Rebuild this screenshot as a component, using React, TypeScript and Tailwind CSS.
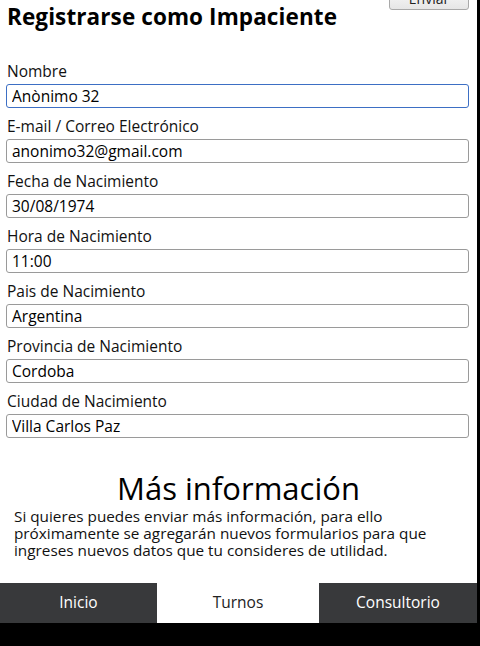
import React from 'react';

const campos = [
  { label: 'Nombre', value: 'Anònimo 32', focus: true },
  { label: 'E-mail / Correo Electrónico', value: 'anonimo32@gmail.com' },
  { label: 'Fecha de Nacimiento', value: '30/08/1974' },
  { label: 'Hora de Nacimiento', value: '11:00' },
  { label: 'Pais de Nacimiento', value: 'Argentina' },
  { label: 'Provincia de Nacimiento', value: 'Cordoba' },
  { label: 'Ciudad de Nacimiento', value: 'Villa Carlos Paz' },
];

const App: React.FC = () => {
  return (
    <div className="min-h-screen bg-black font-['Open_Sans',sans-serif] text-black">
      <div className="w-[477px] h-[623px] bg-white flex flex-col overflow-hidden">
        {/* Header */}
        <div className="flex justify-between items-start">
          <h1 className="pl-[7px] pt-[2px] text-[22.5px] leading-[30px] font-bold tracking-[0.1px]">
            Registrarse como Impaciente
          </h1>
          <button className="-mt-[12px] mr-[8px] w-[80px] h-[22px] border border-[#a9a9a9] rounded-[3px] bg-gradient-to-b from-[#fafafa] to-[#e6e6e6] text-[14px] leading-[20px] text-[#222]">
            Enviar
          </button>
        </div>

        {/* Form */}
        <div className="mt-[29px] px-[6px] pr-[8px] flex flex-col gap-[8px]">
          {campos.map((c) => (
            <div key={c.label} className="flex flex-col gap-[3px]">
              <label className="pl-px text-[15.5px] leading-[20px] text-[#111]">{c.label}</label>
              <input
                readOnly
                value={c.value}
                className={
                  c.focus
                    ? 'h-[24px] w-full rounded-[3px] border border-[#3d6fc4] px-[5px] text-[15.5px] leading-[22px] outline-none'
                    : 'h-[24px] w-full rounded-[3px] border border-[#9a9a9a] px-[5px] text-[15.5px] leading-[22px] outline-none'
                }
              />
            </div>
          ))}
        </div>

        {/* Más información */}
        <h2 className="mt-[32px] text-center text-[31px] leading-[36px]">Más información</h2>
        <p className="mt-[2px] px-[14px] text-[15.3px] leading-[17px] text-[#111]">
          Si quieres puedes enviar más información, para ello próximamente se agregarán nuevos formularios para que ingreses nuevos datos que tu consideres de utilidad.
        </p>

        {/* Nav */}
        <nav className="mt-auto h-[40px] flex text-[15.5px]">
          <div className="w-[157px] bg-[#38393b] text-white flex items-center justify-center">Inicio</div>
          <div className="w-[162px] bg-white text-[#222] flex items-center justify-center">Turnos</div>
          <div className="flex-1 bg-[#38393b] text-white flex items-center justify-center">Consultorio</div>
        </nav>
      </div>
    </div>
  );
};

export default App;
